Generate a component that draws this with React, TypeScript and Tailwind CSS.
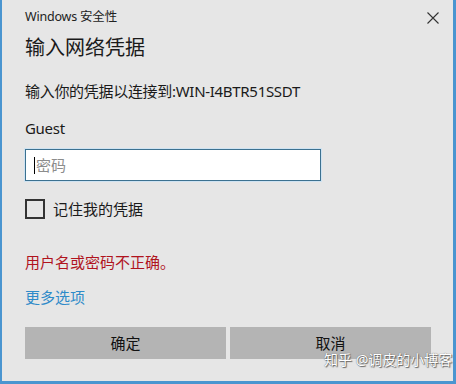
export default function App() {
  return (
    <div
      className="relative w-[456px] h-[384px] overflow-hidden bg-[#e6e6e6] border-l-2 border-r-[3px] border-b-[3px] border-[#4a95d0] text-[#1a1a1a]"
      style={{ fontFamily: '"Noto Sans", "Noto Sans CJK SC", sans-serif' }}
    >
      {/* Title bar */}
      <div className="flex items-center justify-between h-[34px] pl-[23px] pr-[14px]">
        <span className="text-[12.5px] leading-none text-[#222] tracking-[-0.2px]">Windows 安全性</span>
        <svg width="12" height="12" viewBox="0 0 12 12" className="mt-[1px]">
          <path d="M0.5 0.5L11.5 11.5M11.5 0.5L0.5 11.5" stroke="#333" strokeWidth="1.1" fill="none" />
        </svg>
      </div>

      <div className="flex flex-col pl-[23px] pr-[22px]">
        <h1 className="text-[20px] leading-[28px] font-normal">输入网络凭据</h1>

        <p className="mt-[18px] text-[15px] leading-[22px] tracking-[-0.3px]">输入你的凭据以连接到:WIN-I4BTR51SSDT</p>

        <p className="mt-[15px] text-[15px] leading-[22px] tracking-[-0.3px]">Guest</p>

        <div className="mt-[10px] w-[296px] h-[32px] bg-white border border-[#3c7190] shadow-[0_0_0_1px_#cfe3f2] flex items-center pl-[8px]">
          <span className="w-px h-[17px] bg-black" />
          <span className="ml-[1px] text-[15px] text-[#8c8c8c]">密码</span>
        </div>

        <label className="mt-[18px] flex items-center gap-[8px]">
          <span className="w-[20px] h-[20px] border-2 border-[#333]" />
          <span className="text-[15px] leading-[20px]">记住我的凭据</span>
        </label>

        <p className="mt-[32px] text-[15px] leading-[22px] text-[#b0141e]">用户名或密码不正确。</p>

        <p className="mt-[13px] text-[15px] leading-[22px] text-[#2f8bc9]">更多选项</p>

        <div className="mt-[19px] flex gap-[4px]">
          <button className="w-[201px] h-[32px] bg-[#b4b4b4] text-[15px] text-[#111]">确定</button>
          <button className="w-[201px] h-[32px] bg-[#b4b4b4] text-[15px] text-[#111]">取消</button>
        </div>
      </div>

      {/* Watermark */}
      <span className="absolute left-[322px] top-[352px] whitespace-nowrap text-[14px] leading-[15px] text-white [text-shadow:0_0_1px_#555,1px_1px_1px_#666]">
        知乎 @调皮的小博客
      </span>
    </div>
  );
}
